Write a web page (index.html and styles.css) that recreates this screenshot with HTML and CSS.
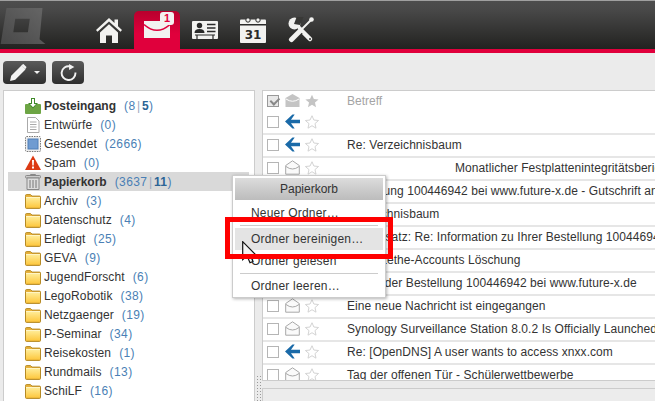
FILE: index.html
```html
<!DOCTYPE html>
<html lang="de">
<head>
<meta charset="utf-8">
<title>Papierkorb</title>
<link rel="stylesheet" href="styles.css">
</head>
<body>
<svg class="defs" width="0" height="0">
  <defs>
    <linearGradient id="fgrad" x1="0" y1="0" x2="0" y2="1">
      <stop offset="0" stop-color="#ffeb94"/>
      <stop offset="1" stop-color="#fdc840"/>
    </linearGradient>
    <linearGradient id="lgrad" x1="1" y1="0" x2="0" y2="1">
      <stop offset="0" stop-color="#666"/>
      <stop offset="1" stop-color="#484848"/>
    </linearGradient>
    <symbol id="folder" viewBox="0 0 16 16">
      <path d="M.5 3.500V2.600q0-1 1-1h4l1.500 1.500h7.500q1 0 1 1v10.300q0 1-1 1h-13q-1 0-1-1z" fill="#e8b13a" stroke="#b58a25"/>
      <rect x="1" y="5" width="14" height="9.500" fill="url(#fgrad)"/>
      <rect x="1" y="4" width="14" height="1" fill="#fff5c4"/>
    </symbol>
    <symbol id="arrow" viewBox="0 0 15 14">
      <path d="M7.500 0 0 7l7.500 7h2.200L6 8.800h9V5.200H6L9.700 0z" fill="#1a6aa8"/>
    </symbol>
    <symbol id="star" viewBox="0 0 15 15">
      <path d="M7.500.8l2 4.600 5 .5-3.800 3.300 1.100 4.900-4.300-2.600-4.300 2.600 1.100-4.900L.4 5.900l5-.5z" fill="#fff" stroke="#d0d0d0"/>
    </symbol>
    <symbol id="env" viewBox="0 0 15 15">
      <path d="M.7 5.500 7.500.8l6.800 4.700v8.700H.7z" fill="#fafafa" stroke="#a8a8a8"/>
      <path d="M1 6.500q6.500 5 13 0" fill="none" stroke="#a8a8a8"/>
    </symbol>
  </defs>
</svg>

<header class="topbar">
  <svg class="logo" viewBox="0 0 47 37"><path fill-rule="evenodd" d="M6 0h37l-3 32 6 5H0zM15 11l-2 14h15l2-14z" fill="url(#lgrad)"/></svg>
  <nav class="nav">
    <a class="nav-item"><svg class="nav-icon" viewBox="0 0 26 26"><path d="M13 1 0 13l1.500 1.800L13 4.500l11.500 10.300L26 13l-4-3.700V2.500h-3.500v3.600z" fill="#f2f2f0"/><path d="M4 15.500 13 7.200l9 8.300V26h-6v-7.500h-6V26H4z" fill="#f2f2f0"/></svg></a>
    <a class="nav-item active">
      <svg class="nav-icon" viewBox="0 0 26 26"><path d="M0 4h26v17H0z" fill="#f2f2f0"/><path d="M0 7.500Q13 19 26 7.500" fill="none" stroke="#e0003c" stroke-width="1.600"/></svg>
      <span class="badge">1</span>
    </a>
    <a class="nav-item"><svg class="nav-icon" viewBox="0 0 26 26"><path d="M1 4h24q1 0 1 1v16q0 1-1 1H1q-1 0-1-1V5q0-1 1-1z" fill="#f2f2f0"/><circle cx="7.500" cy="8.500" r="2.700" fill="#2a2a2a"/><path d="M2.500 16q0-4 5-4t5 4z" fill="#2a2a2a"/><path d="M15 7.500h8.500M15 11h8.500M15 14.500h8.500" stroke="#2a2a2a" stroke-width="1.500"/><path d="M3 18h20M5 18v4M21 18v4" stroke="#2a2a2a" stroke-width="1.200"/></svg></a>
    <a class="nav-item"><svg class="nav-icon" viewBox="0 0 26 26"><path d="M1 2.500h24q1 0 1 1V25q0 1-1 1H1q-1 0-1-1V3.500q0-1 1-1z" fill="#f2f2f0"/><rect y="7" width="26" height="1.500" fill="#2a2a2a"/><circle cx="8" cy="3" r="2.200" fill="#f2f2f0" stroke="#2a2a2a"/><circle cx="18" cy="3" r="2.200" fill="#f2f2f0" stroke="#2a2a2a"/><text class="cal-text" x="13" y="22" text-anchor="middle">31</text></svg></a>
    <a class="nav-item"><svg class="nav-icon" viewBox="0 0 26 26"><path d="M6.500 6.500 22 22" stroke="#f2f2f0" stroke-width="4.500" stroke-linecap="round"/><circle cx="6.500" cy="6.500" r="6" fill="#f2f2f0"/><path d="M6 7 9 -1h7L12 8z" fill="#383836"/><circle cx="22" cy="22" r="1" fill="#383836"/><path d="M12 14 3.500 22.500" stroke="#2e2e2c" stroke-width="7.500"/><path d="M12 14 3.500 22.500" stroke="#f2f2f0" stroke-width="5" stroke-linecap="round"/><path d="M23 3 12 14" stroke="#f2f2f0" stroke-width="2"/><circle cx="23.500" cy="2.500" r="2.300" fill="#f2f2f0"/></svg></a>
  </nav>
</header>

<div class="toolbar">
  <button class="tool tool-edit" type="button">
    <svg class="tool-icon" viewBox="0 0 17 17"><path d="M0 17l1.200-5.200L11.500 1.500l4 4L5.200 15.800zM12.500.5l1-.5 3 3-.5 1.200-.8.800-3.900-3.800z" fill="#f2f2f2"/></svg>
    <span class="caret"></span>
  </button>
  <button class="tool tool-reload" type="button">
    <svg class="tool-icon" viewBox="0 0 16 16"><path d="M9.500 2.300A6.500 6.500 0 1 0 14.500 8" fill="none" stroke="#f2f2f2" stroke-width="1.800"/><path d="M8.500 0l5 2.800-5 2.800z" fill="#f2f2f2"/></svg>
  </button>
</div>

<main class="main">
  <aside class="folders">
    <ul class="folder-list">
      <li class="folder strong"><svg class="ficon" viewBox="0 0 16 16"><path d="M1 6h3.500l1.500 2h4l1.500-2H15q1 0 1 1v8q0 1-1 1H1q-1 0-1-1V7q0-1 1-1z" fill="#6da544"/><path d="M6 0h4v5h3l-5 5.500L3 5h3z" fill="#3f8a2a"/><path d="M7 1h2v5h2l-3 3.300L5 6h2z" fill="#fff"/></svg><span class="fname">Posteingang</span><span class="count">(8<i class="sep">|</i><b>5</b>)</span></li>
      <li class="folder"><svg class="ficon" viewBox="0 0 16 16"><path d="M2.500.5h8l3.500 3.500v11.500h-11.500z" fill="#fff" stroke="#aaa"/><path d="M5 5h6.500M5 7.500h6.500M5 10h6.500M5 12.500h6.500" stroke="#aaa"/></svg><span class="fname">Entwürfe</span><span class="count">(0)</span></li>
      <li class="folder"><svg class="ficon" viewBox="0 0 16 16"><rect x=".5" y=".5" width="15" height="15" rx="1" fill="#eee" stroke="#777" stroke-dasharray="1.500 1"/><rect x="3" y="3" width="10" height="10" fill="#6f9bd1" stroke="#4f7fb8"/></svg><span class="fname">Gesendet</span><span class="count">(2666)</span></li>
      <li class="folder"><svg class="ficon" viewBox="0 0 16 16"><path d="M8 .5 16 15H0z" fill="#dc3a14"/><path d="M7 5h2l-.3 5.500H7.300zM7 11.500h2v2H7z" fill="#fff"/></svg><span class="fname">Spam</span><span class="count">(0)</span></li>
      <li class="folder strong selected"><svg class="ficon" viewBox="0 0 16 16"><path d="M5.500 1.500V.5h5v1" fill="none" stroke="#888"/><rect x=".5" y="1.500" width="15" height="2.500" rx="1" fill="#ccc" stroke="#888"/><path d="M2 4h12v11.500H2z" fill="#ddd" stroke="#888"/><path d="M5 6v8M8 6v8M11 6v8" stroke="#888" stroke-width="1.200"/></svg><span class="fname">Papierkorb</span><span class="count">(3637<i class="sep">|</i><b>11</b>)</span></li>
      <li class="folder"><svg class="ficon"><use href="#folder"/></svg><span class="fname">Archiv</span><span class="count">(3)</span></li>
      <li class="folder"><svg class="ficon"><use href="#folder"/></svg><span class="fname">Datenschutz</span><span class="count">(4)</span></li>
      <li class="folder"><svg class="ficon"><use href="#folder"/></svg><span class="fname">Erledigt</span><span class="count">(25)</span></li>
      <li class="folder"><svg class="ficon"><use href="#folder"/></svg><span class="fname">GEVA</span><span class="count">(9)</span></li>
      <li class="folder"><svg class="ficon"><use href="#folder"/></svg><span class="fname">JugendForscht</span><span class="count">(6)</span></li>
      <li class="folder"><svg class="ficon"><use href="#folder"/></svg><span class="fname">LegoRobotik</span><span class="count">(38)</span></li>
      <li class="folder"><svg class="ficon"><use href="#folder"/></svg><span class="fname">Netzgaenger</span><span class="count">(19)</span></li>
      <li class="folder"><svg class="ficon"><use href="#folder"/></svg><span class="fname">P-Seminar</span><span class="count">(34)</span></li>
      <li class="folder"><svg class="ficon"><use href="#folder"/></svg><span class="fname">Reisekosten</span><span class="count">(1)</span></li>
      <li class="folder"><svg class="ficon"><use href="#folder"/></svg><span class="fname">Rundmails</span><span class="count">(13)</span></li>
      <li class="folder"><svg class="ficon"><use href="#folder"/></svg><span class="fname">SchiLF</span><span class="count">(16)</span></li>
    </ul>
  </aside>
  <div class="splitter"></div>
  <section class="content">
    <div class="messages">
      <div class="row head"><span class="check checked"></span><svg class="mi env-head" viewBox="0 0 15 15"><path d="M.5 5 7.500 1l7 4v9H.5z" fill="#c4c4c4"/><path d="M1 6q6.500 4.500 13 0" fill="none" stroke="#fff"/></svg><svg class="star-head" viewBox="0 0 15 15"><path d="M7.500.8l2 4.600 5 .5-3.800 3.300 1.100 4.900-4.300-2.600-4.300 2.600 1.100-4.900L.4 5.900l5-.5z" fill="#c4c4c4"/></svg><span class="subject muted">Betreff</span></div>
      <div class="row"><span class="check"></span><svg class="mi"><use href="#arrow"/></svg><svg class="si"><use href="#star"/></svg><span class="subject"></span></div>
      <div class="row"><span class="check"></span><svg class="mi"><use href="#arrow"/></svg><svg class="si"><use href="#star"/></svg><span class="subject">Re: Verzeichnisbaum</span></div>
      <div class="row"><span class="check"></span><svg class="mi"><use href="#env"/></svg><svg class="si"><use href="#star"/></svg><span class="subject indent">Monatlicher Festplattenintegritätsbericht</span></div>
      <div class="row"><span class="check"></span><svg class="mi"><use href="#env"/></svg><svg class="si"><use href="#star"/></svg><span class="subject">Bestellung 100446942 bei www.future-x.de - Gutschrift an</span></div>
      <div class="row"><span class="check"></span><svg class="mi"><use href="#env"/></svg><svg class="si"><use href="#star"/></svg><span class="subject">Verzeichnisbaum</span></div>
      <div class="row"><span class="check"></span><svg class="mi"><use href="#env"/></svg><svg class="si"><use href="#star"/></svg><span class="subject">Sachersatz: Re: Information zu Ihrer Bestellung 10044694</span></div>
      <div class="row"><span class="check"></span><svg class="mi"><use href="#env"/></svg><svg class="si"><use href="#star"/></svg><span class="subject">Infos: Lethe-Accounts Löschung</span></div>
      <div class="row"><span class="check"></span><svg class="mi"><use href="#env"/></svg><svg class="si"><use href="#star"/></svg><span class="subject">Status der Bestellung 100446942 bei www.future-x.de</span></div>
      <div class="row"><span class="check"></span><svg class="mi"><use href="#env"/></svg><svg class="si"><use href="#star"/></svg><span class="subject">Eine neue Nachricht ist eingegangen</span></div>
      <div class="row"><span class="check"></span><svg class="mi"><use href="#env"/></svg><svg class="si"><use href="#star"/></svg><span class="subject">Synology Surveillance Station 8.0.2 Is Officially Launched</span></div>
      <div class="row"><span class="check"></span><svg class="mi"><use href="#arrow"/></svg><svg class="si"><use href="#star"/></svg><span class="subject">Re: [OpenDNS] A user wants to access xnxx.com</span></div>
      <div class="row"><span class="check"></span><svg class="mi"><use href="#env"/></svg><svg class="si"><use href="#star"/></svg><span class="subject">Tag der offenen Tür - Schülerwettbewerbe</span></div>
    </div>
    <div class="statusbar"></div>
  </section>
</main>

<div class="menu">
  <div class="menu-title">Papierkorb</div>
  <div class="menu-item">Neuer Ordner…</div>
  <div class="menu-sep"></div>
  <div class="menu-item hover">Ordner bereinigen…</div>
  <div class="menu-item">Ordner gelesen</div>
  <div class="menu-sep tight"></div>
  <div class="menu-item">Ordner leeren…</div>
</div>
<svg class="cursor" viewBox="0 0 14 23"><path d="M.7.700v18l4.300-4 3 7 3-1.300-3-6.800h5.500z" fill="#f4f4f4" stroke="#111" stroke-width="1.200"/></svg>
<div class="highlight"></div>
</body>
</html>
```
FILE: styles.css
```css
* { box-sizing: border-box; }
html, body { margin: 0; height: 100%; }
body {
  width: 655px;
  height: 401px;
  overflow: hidden;
  position: relative;
  background: #ebebeb;
  font-family: "Liberation Sans", Arial, sans-serif;
  font-size: 12px;
  color: #333;
}
.defs { position: absolute; }

.topbar {
  height: 53px;
  display: flex;
  background: linear-gradient(#4d4d4d, #4a4a4a 15%, #222220);
  border-top: 1px solid #a0a0a0;
  border-bottom: 4px solid #e0003c;
}
.logo { width: 47px; height: 36px; margin-top: 7px; flex: none; }
.nav { display: flex; margin-left: 39px; margin-top: 10px; gap: 2px; }
.nav-item {
  width: 46px;
  height: 38px;
  display: flex;
  justify-content: center;
  align-items: flex-start;
  padding-top: 6px;
  position: relative;
  border-radius: 5px 5px 0 0;
}
.nav-icon { width: 26px; height: 26px; }
.active { background: linear-gradient(#b8002d, #e0003c 60%); }
.badge {
  position: absolute;
  left: 26px;
  top: 1px;
  width: 14px;
  height: 13px;
  background: #f4f0f0;
  border-radius: 3px;
  color: #e0003c;
  font-size: 11px;
  font-weight: bold;
  line-height: 13px;
  text-align: center;
}
.cal-text { font: bold 12px "DejaVu Sans", sans-serif; fill: #2a2a2a; }

.toolbar { height: 37px; padding: 8px 0 0 3px; display: flex; gap: 6px; }
.tool {
  height: 23px;
  border: 0;
  border-radius: 4px;
  padding: 0;
  background: linear-gradient(#5a5a5a, #2e2e2e);
  display: flex;
  align-items: center;
  justify-content: center;
}
.tool-edit { width: 43px; gap: 7px; }
.tool-reload { width: 32px; }
.tool-icon { width: 17px; height: 17px; }
.caret {
  width: 0;
  height: 0;
  border: 3px solid transparent;
  border-top: 3px solid #f2f2f2;
  border-bottom: 0;
}

.main { display: flex; align-items: stretch; height: 311px; padding-left: 3px; }
.folders {
  width: 252px;
  height: 330px;
  background: #fff;
  border: 1px solid #ccc;
  padding: 5px 5px 0 4px;
  flex: none;
}
.folder-list { list-style: none; margin: 0; padding: 0; }
.folder {
  height: 19px;
  display: flex;
  align-items: center;
  padding-left: 17px;
  white-space: nowrap;
}
.selected { background: #d9d9d9; }
.ficon { width: 16px; height: 16px; flex: none; }
.fname { margin-left: 3px; letter-spacing: .1px; }
.strong .fname { font-weight: bold; letter-spacing: 0; }
.count { margin-left: 8px; color: #4a7fb5; letter-spacing: .4px; }
.count b { color: #2c6496; }
.sep { font-style: normal; color: #98a8c0; margin: 0 1.500px; }

.splitter {
  width: 7px;
  height: 26px;
  align-self: flex-end;
  flex: none;
  background: radial-gradient(circle, #999 .7px, transparent .8px) 1px 0 / 3px 3px repeat;
}
.content { flex: none; width: 394px; }
.messages {
  height: 291px;
  background: #fff;
  border: 1px solid #ccc;
  border-right: 0;
  overflow: hidden;
}
.row {
  height: 23px;
  display: flex;
  align-items: center;
  border-top: 2px solid #e6e6e6;
  padding: 0 0 2px 4px;
  white-space: nowrap;
  letter-spacing: .07px;
}
.head { height: 19px; border-top: 0; padding-bottom: 0; }
.head + .row { border-top: 0; padding-bottom: 0; }
.check {
  width: 12px;
  height: 12px;
  border: 1px solid #b5b5b5;
  background: #fff;
  flex: none;
}
.checked { background: #e8e8e8; border-color: #999; position: relative; }
.checked::after {
  content: "";
  position: absolute;
  left: 1px;
  top: 0;
  width: 7px;
  height: 4px;
  border: solid #888;
  border-width: 0 0 2px 2px;
  transform: rotate(-45deg) translate(0, 2px);
}
.mi { width: 15px; height: 15px; margin-left: 6px; flex: none; }
.si { width: 14px; height: 14px; margin-left: 5px; flex: none; }
.star-head { width: 14px; height: 14px; margin-left: 5px; flex: none; }
.subject { margin-left: 28px; }
.muted { color: #a4a4a4; letter-spacing: 0; }
.indent { margin-left: 136px; }
.statusbar {
  height: 20px;
  margin-top: 7px;
  background: #ececec;
  border: 1px solid #ccc;
  border-right: 0;
  border-bottom: 0;
}

.menu {
  position: absolute;
  left: 232px;
  top: 175px;
  width: 154px;
  height: 123px;
  background: #fff;
  border: 1px solid #ccc;
  box-shadow: 1px 1px 3px rgba(0, 0, 0, .3);
  padding: 2px;
}
.menu-title {
  height: 22px;
  line-height: 22px;
  text-align: center;
  background: linear-gradient(#dcdcdc, #bcbcbc);
  margin-bottom: 2px;
}
.menu-item {
  height: 22px;
  line-height: 22px;
  padding-left: 16px;
  letter-spacing: .2px;
}
.hover { background: #e4e4e4; }
.menu-sep { height: 1px; background: #ccc; margin: 1px 5px 2px; }
.tight { margin-bottom: 1px; }
.cursor { position: absolute; left: 242px; top: 241px; width: 14px; height: 23px; }
.highlight {
  position: absolute;
  left: 225px;
  top: 217px;
  width: 168px;
  height: 42px;
  border: 5px solid #f00;
}
```
